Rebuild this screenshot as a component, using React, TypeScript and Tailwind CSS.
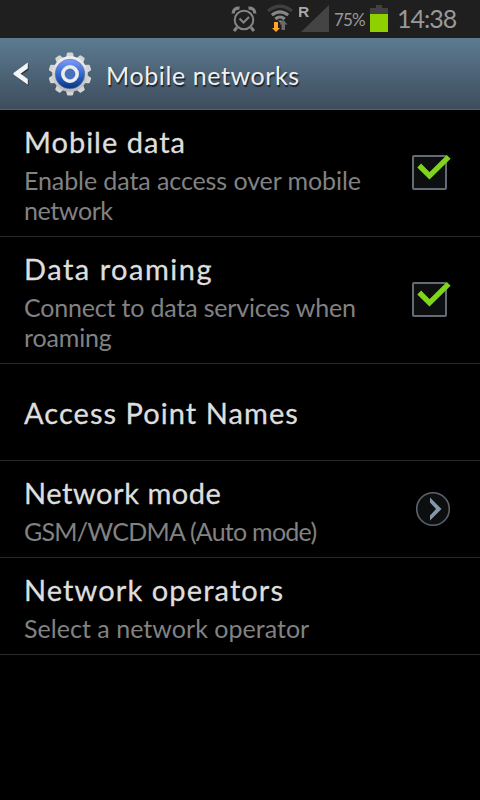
import { ReactNode } from "react";
import clsx from "clsx";

type Setting = {
  title: string;
  titleClass: string;
  lines?: { text: string; className: string }[];
  height: string;
  control?: ReactNode;
};

const CheckBox = () => (
  <svg width="42" height="40" viewBox="0 0 42 40" className="-mr-0.5 mb-1">
    <rect x="3" y="5" width="33" height="33" rx="1" fill="#0c0e10" stroke="#656b76" strokeWidth="2" />
    <path d="M9.2 14.5 L19.5 24.8 L38.7 5.8" fill="none" stroke="#7fd41c" strokeWidth="5.4" />
  </svg>
);

const MoreButton = () => (
  <svg width="36" height="36" viewBox="0 0 36 36" className="-mr-px">
    <circle cx="18" cy="18" r="16.3" fill="#0c0e10" stroke="#5d636c" strokeWidth="1.6" />
    <path d="M15 6.5 L26.5 18 L15 29.5 V24.5 L21 18 L15 11.5 Z" fill="#8498ac" />
  </svg>
);

const settings: Setting[] = [
  {
    title: "Mobile data",
    titleClass: "tracking-[1px]",
    lines: [
      { text: "Enable data access over mobile", className: "tracking-[-0.09px]" },
      { text: "network", className: "tracking-[-0.4px]" },
    ],
    height: "h-[127px]",
    control: <CheckBox />,
  },
  {
    title: "Data roaming",
    titleClass: "tracking-[1.5px]",
    lines: [
      { text: "Connect to data services when", className: "tracking-[-0.18px]" },
      { text: "roaming", className: "tracking-[-0.15px]" },
    ],
    height: "h-[127px]",
    control: <CheckBox />,
  },
  {
    title: "Access Point Names",
    titleClass: "tracking-[1.05px]",
    height: "h-[97px]",
  },
  {
    title: "Network mode",
    titleClass: "tracking-[0.55px]",
    lines: [{ text: "GSM/WCDMA (Auto mode)", className: "tracking-[-0.75px]" }],
    height: "h-[97px]",
    control: <MoreButton />,
  },
  {
    title: "Network operators",
    titleClass: "tracking-[1.1px]",
    lines: [{ text: "Select a network operator", className: "tracking-[0.03px]" }],
    height: "h-[97px]",
  },
];

const AlarmIcon = () => (
  <svg width="26" height="28" viewBox="0 0 26 28" fill="none" stroke="#858585" strokeWidth="2">
    <circle cx="13" cy="15" r="9.3" />
    <path d="M8.5 13.5 L12.5 17.5 L18 12" />
    <path d="M6 22.5 L3 26 M20 22.5 L23 26" strokeWidth="3" />
    <path d="M2.2 8.5 C2 4.5 5 2.8 8.5 3.2 M23.8 8.5 C24 4.5 21 2.8 17.5 3.2" strokeWidth="3.2" />
  </svg>
);

const WifiIcon = () => (
  <svg width="28" height="30" viewBox="0 0 28 30" fill="none">
    <path d="M2 9 Q14 -0.5 26 9" stroke="#3f3f3f" strokeWidth="3.2" />
    <path d="M5.8 13.2 Q14 6.5 22.2 13.2" stroke="#858585" strokeWidth="3" />
    <path d="M9.3 17 Q14 13 18.7 17" stroke="#858585" strokeWidth="3" />
    <path d="M12 18.5 H17 L14.5 21 Z" fill="#858585" />
    <path d="M8 20 H12 V26 H14 L10 30 L6 26 H8 Z" fill="#ffa52f" />
    <path d="M15.5 28 H19 V22.5 H21.5 L17.3 18 L13.5 22.5 H15.5 Z" fill="#6b6b6b" />
  </svg>
);

const SignalIcon = () => (
  <svg width="32" height="32" viewBox="0 0 32 32">
    <path d="M30 4 V31 H2 Z" fill="#444444" />
    <text x="-1" y="16" fontFamily="Liberation Sans, sans-serif" fontWeight="700" fontSize="15.5" fill="#a8a8a8">
      R
    </text>
  </svg>
);

const BatteryIcon = () => (
  <svg width="18" height="27" viewBox="0 0 18 27">
    <path d="M6 0 H12 V3 H18 V9 H0 V3 H6 Z" fill="#414141" />
    <rect y="9" width="18" height="18" fill="#8fd100" />
  </svg>
);

const GearIcon = () => (
  <svg width="44" height="44" viewBox="0 0 44 44">
    <defs>
      <linearGradient id="metal" x1="0" y1="0" x2="0" y2="1">
        <stop offset="0" stopColor="#f2f2f2" />
        <stop offset="1" stopColor="#b9b9b9" />
      </linearGradient>
      <linearGradient id="blue" x1="0" y1="0" x2="0" y2="1">
        <stop offset="0" stopColor="#7d9cff" />
        <stop offset="0.5" stopColor="#3568cc" />
        <stop offset="1" stopColor="#03357f" />
      </linearGradient>
    </defs>
    <g fill="#d5d5d5">
      {[0, 36, 72, 108, 144, 180, 216, 252, 288, 324].map((angle) => (
        <path
          key={angle}
          d="M17.5 7 L19 1.2 Q19.2 0.5 20 0.5 H24 Q24.8 0.5 25 1.2 L26.5 7 Z"
          transform={`rotate(${angle} 22 22)`}
        />
      ))}
    </g>
    <circle cx="22" cy="22" r="17.8" fill="url(#metal)" />
    <circle cx="22" cy="22" r="14.8" fill="url(#blue)" stroke="#5a6fa0" strokeWidth="0.6" />
    <circle cx="22" cy="22" r="7.2" fill="#4a70bd" stroke="#ececec" strokeWidth="3.6" />
  </svg>
);

const StatusBar = () => (
  <div className="flex h-[38px] bg-[#1f1f1f] text-[#999999]">
    <div className="ml-[231px] mt-[5px] w-[26px]">
      <AlarmIcon />
    </div>
    <div className="ml-[9px] mt-[2px] w-[28px]">
      <WifiIcon />
    </div>
    <div className="ml-[5px] mt-px w-[32px]">
      <SignalIcon />
    </div>
    <span className="ml-[3px] mt-[8px] w-[32px] whitespace-nowrap text-[17px] leading-[24px] tracking-[-0.8px]">75%</span>
    <div className="ml-[4px] mt-[5px] w-[18px]">
      <BatteryIcon />
    </div>
    <span className="ml-[9px] mt-[2px] whitespace-nowrap text-[25px] leading-[32px] tracking-[-1px]">14:38</span>
  </div>
);

const Header = () => (
  <header className="flex h-[72px] items-center border-b border-[#4d6275] bg-gradient-to-b from-[#5c7b91] to-[#3e4d5e]">
    <svg width="16" height="24" viewBox="0 0 16 24" className="ml-[13px]">
      <path d="M15.5 2 V8 L8 13 L15.5 18 V24 L1 13 Z" fill="#27323d" />
      <path d="M14.8 0.6 V6.4 L7.5 11.7 L14.8 17 V22.8 L0.5 12.4 V11 Z" fill="#f5f5f5" />
    </svg>
    <div className="ml-[19px]">
      <GearIcon />
    </div>
    <h1 className="ml-[14px] mt-[3px] whitespace-nowrap text-[25px] leading-[32px] tracking-[0.6px] text-[#f0f0f0] [text-shadow:1px_2px_1px_#1b242d]">
      Mobile networks
    </h1>
  </header>
);

const SettingRow = ({ title, titleClass, lines, height, control }: Setting) => (
  <li className={clsx("flex items-center justify-between border-b border-[#292929] pl-6 pr-[30px]", height)}>
    <div className="mt-px whitespace-nowrap">
      <h2
        className={clsx(
          "text-[29px] leading-[38px] text-[#dedede] [-webkit-text-stroke:0.3px_#dedede]",
          lines && "mb-1",
          titleClass,
        )}
      >
        {title}
      </h2>
      {lines?.map((line) => (
        <p key={line.text} className={clsx("text-[25px] leading-[30px] text-[#828282]", line.className)}>
          {line.text}
        </p>
      ))}
    </div>
    {control}
  </li>
);

export default function App() {
  return (
    <div className="h-[800px] w-[480px] overflow-hidden bg-black font-['Lato','Liberation_Sans',sans-serif]">
      <StatusBar />
      <Header />
      <ul>
        {settings.map((setting) => (
          <SettingRow key={setting.title} {...setting} />
        ))}
      </ul>
    </div>
  );
}
